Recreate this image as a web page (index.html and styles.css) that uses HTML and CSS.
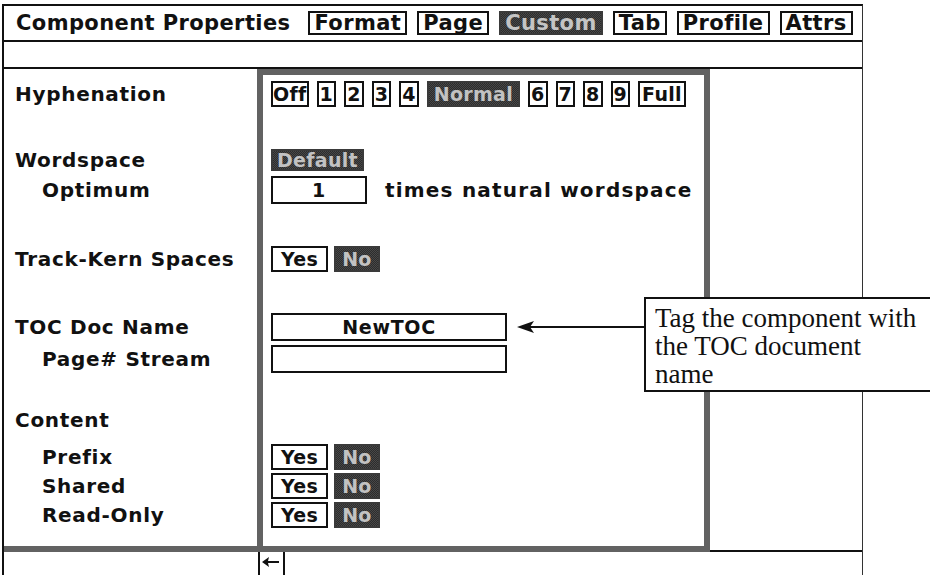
FILE: index.html
```html
<!DOCTYPE html>
<html>
<head>
<meta charset="utf-8">
<title>Component Properties</title>
<link rel="stylesheet" href="styles.css">
</head>
<body>
<div class="window">

  <div class="titlebar">
    <span class="title">Component Properties</span>
    <span class="tab">Format</span>
    <span class="tab">Page</span>
    <span class="tab on">Custom</span>
    <span class="tab">Tab</span>
    <span class="tab">Profile</span>
    <span class="tab">Attrs</span>
  </div>

  <div class="blankrow"></div>

  <div class="main">
    <!-- left column: property names -->
    <div class="labels">
      <div class="group g-hyph">
        <div class="row">Hyphenation</div>
      </div>
      <div class="group g-word">
        <div class="row">Wordspace</div>
        <div class="row sub">Optimum</div>
      </div>
      <div class="group g-track">
        <div class="row">Track-Kern Spaces</div>
      </div>
      <div class="group g-toc">
        <div class="row">TOC Doc Name</div>
        <div class="row sub">Page# Stream</div>
      </div>
      <div class="group g-content">
        <div class="row head">Content</div>
        <div class="row sub short">Prefix</div>
        <div class="row sub short">Shared</div>
        <div class="row sub short">Read-Only</div>
      </div>
    </div>

    <!-- middle: the values -->
    <div class="panel">
      <div class="group g-hyph">
        <div class="row opts">
          <span class="opt tight">Off</span>
          <span class="opt digit">1</span>
          <span class="opt digit">2</span>
          <span class="opt digit">3</span>
          <span class="opt digit">4</span>
          <span class="opt on">Normal</span>
          <span class="opt digit">6</span>
          <span class="opt digit">7</span>
          <span class="opt digit">8</span>
          <span class="opt digit">9</span>
          <span class="opt">Full</span>
        </div>
      </div>
      <div class="group g-word">
        <div class="row"><span class="opt on wide">Default</span></div>
        <div class="row">
          <span class="field">1</span>
          <span class="note">times natural wordspace</span>
        </div>
      </div>
      <div class="group g-track">
        <div class="row yesno"><span class="opt yes">Yes</span><span class="opt on no">No</span></div>
      </div>
      <div class="group g-toc">
        <div class="row"><span class="field long">NewTOC</span></div>
        <div class="row"><span class="field long"></span></div>
      </div>
      <div class="group g-content">
        <div class="row head"></div>
        <div class="row short yesno"><span class="opt yes">Yes</span><span class="opt on no">No</span></div>
        <div class="row short yesno"><span class="opt yes">Yes</span><span class="opt on no">No</span></div>
        <div class="row short yesno"><span class="opt yes">Yes</span><span class="opt on no">No</span></div>
      </div>
    </div>

    <div class="side"></div>

    <svg class="pointer" width="128" height="14" viewBox="0 0 128 14">
      <line x1="10" y1="7" x2="128" y2="7" stroke="#111" stroke-width="2"/>
      <polygon points="0,7 17,1 13,7 17,13" fill="#111"/>
    </svg>
    <div class="callout">Tag the component with<br>the TOC document<br>name</div>
  </div>

  <div class="statusrow">
    <div class="scrollbtn">
      <svg width="18" height="10" viewBox="0 0 18 10">
        <polygon points="0,5 7,0 6,4 17,4 17,6 6,6 7,10" fill="#111"/>
      </svg>
    </div>
  </div>

</div>
</body>
</html>
```

FILE: styles.css
```css
html, body {
  margin: 0;
  background: #fff;
  overflow: hidden;
}

body {
  font-family: "DejaVu Sans", Verdana, sans-serif;
  font-weight: bold;
  color: #111;
}

/* outer frame */
.window {
  margin: 4px 0 0 2px;
  width: 858px;
  height: 575px;
  border-top: 2px solid #111;
  border-left: 2px solid #111;
  border-right: 1px solid #333;
  display: flex;
  flex-direction: column;
}

/* title + tabs */
.titlebar {
  height: 34px;
  flex: none;
  border-bottom: 2px solid #111;
  display: flex;
  align-items: center;
  gap: 10px;
  padding-left: 12px;
}

.title {
  font-size: 21px;
  letter-spacing: 0.4px;
  margin-right: 8px;
}

.tab {
  font-size: 21px;
  letter-spacing: 0.4px;
  line-height: 20px;
  padding: 0 4px;
  border: 2px solid #111;
}

.tab.on {
  background: repeating-conic-gradient(#2c2c2c 0 25%, #484848 0 50%) 0 0 / 2px 2px;
  border-color: #3a3a3a;
  color: #c4c4c4;
}

.blankrow {
  height: 25px;
  flex: none;
  border-bottom: 2px solid #111;
}

/* three columns */
.main {
  height: 483px;
  flex: none;
  display: flex;
  position: relative;
}

.labels {
  width: 253px;
  box-sizing: border-box;
  border-bottom: 6px solid #626262;
  padding: 10px 0 0 11px;
}

.panel {
  width: 453px;
  box-sizing: border-box;
  border: 6px solid #626262;
  padding: 4px 0 0 8px;
}

.side {
  flex: 1;
  border-bottom: 2px solid #111;
}

/* rows shared by labels and panel */
.group {
  display: flex;
  flex-direction: column;
}

.g-word { margin-top: 36px; }
.g-track { margin-top: 39px; }
.g-toc { margin-top: 38px; gap: 2px; }
.g-content { margin-top: 31px; }

.row {
  height: 30px;
  display: flex;
  align-items: center;
  gap: 10px;
  font-size: 20px;
  letter-spacing: 0.7px;
  white-space: nowrap;
}

.row.opts { gap: 8px; }
.row.head { margin-bottom: 7px; }
.row.short { height: 29px; }
.labels .row.sub { padding-left: 27px; }

/* option buttons */
.opt {
  font-size: 19px;
  letter-spacing: 0.3px;
  line-height: 22px;
  padding: 0 2px;
  border: 2px solid #111;
}

.opt.digit {
  padding: 0 1px;
}

.opt.tight {
  padding: 0;
}

.opt.on {
  background: repeating-conic-gradient(#2c2c2c 0 25%, #484848 0 50%) 0 0 / 2px 2px;
  border-color: #3a3a3a;
  color: #c2c2c2;
  padding: 0 5px;
}

.opt.wide {
  line-height: 18px;
  padding: 0 4px;
}

.yesno { gap: 6px; }
.opt.yes { padding: 0 8px; }
.opt.on.no { padding: 0 6px; }

/* text fields */
.field {
  width: 96px;
  height: 28px;
  box-sizing: border-box;
  border: 2px solid #111;
  text-align: center;
  font-size: 19px;
  line-height: 24px;
}

.field.long {
  width: 236px;
}

.note {
  margin-left: 8px;
  letter-spacing: 1.2px;
}

/* annotation */
.pointer {
  position: absolute;
  left: 513px;
  top: 251px;
}

.callout {
  position: absolute;
  left: 640px;
  top: 228px;
  width: 300px;
  height: 95px;
  box-sizing: border-box;
  border: 2px solid #111;
  background: #fff;
  padding: 5px 0 0 9px;
  font-family: "Liberation Serif", "Times New Roman", serif;
  font-weight: normal;
  font-size: 27px;
  line-height: 28px;
  white-space: nowrap;
}

/* bottom strip */
.statusrow {
  flex: 1;
  display: flex;
}

.scrollbtn {
  margin-left: 254px;
  width: 21px;
  border-left: 2px solid #111;
  border-right: 2px solid #111;
  padding: 5px 0 0 2px;
}

.scrollbtn svg {
  display: block;
}
```
